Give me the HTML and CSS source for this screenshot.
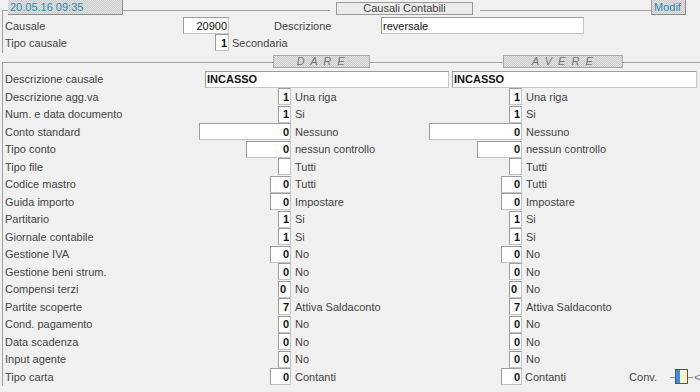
FILE: index.html
```html
<!DOCTYPE html>
<html lang="it">
<head>
    <meta charset="UTF-8">
    <title>Causali Contabili</title>
    <link rel="stylesheet" href="styles.css">
</head>
<body>

<div class="topbar">
    <div class="corner"></div>
    <div class="stamp">20.05.16 09:35</div>
    <div class="rule r1"></div>
    <div class="title">Causali Contabili</div>
    <div class="rule r2"></div>
    <div class="stamp flag">Modif</div>
</div>

<div class="head-block">
    <span class="lbl">Causale</span>
    <input class="fld plain w46" value="20900" readonly>
    <span></span>
    <span class="lbl">Descrizione</span>
    <input class="fld plain left w203" value="reversale" readonly>

    <span class="lbl">Tipo causale</span>
    <input class="fld w14 end" value="1" readonly>
    <span class="txt wide">Secondaria</span>
</div>

<div class="band">
    <div class="corner2"></div>
    <div class="tag dare">D A R E</div>
    <div class="rule r3"></div>
    <div class="tag avere">A V E R E</div>
    <div class="rule r4"></div>
</div>

<div class="rows">
    <div class="dc">
        <span class="lbl dc-lbl">Descrizione causale</span>
        <input class="fld left w244" value="INCASSO" readonly>
        <input class="fld left w245" value="INCASSO" readonly>
    </div>

    <span class="lbl">Descrizione agg.va</span>
    <input class="fld w13" value="1" readonly><span class="txt">Una riga</span>
    <input class="fld w13" value="1" readonly><span class="txt">Una riga</span>

    <span class="lbl">Num. e data documento</span>
    <input class="fld w13" value="1" readonly><span class="txt">Si</span>
    <input class="fld w13" value="1" readonly><span class="txt">Si</span>

    <span class="lbl">Conto standard</span>
    <input class="fld w92" value="0" readonly><span class="txt">Nessuno</span>
    <input class="fld w93" value="0" readonly><span class="txt">Nessuno</span>

    <span class="lbl">Tipo conto</span>
    <input class="fld w45" value="0" readonly><span class="txt">nessun controllo</span>
    <input class="fld w45" value="0" readonly><span class="txt">nessun controllo</span>

    <span class="lbl">Tipo file</span>
    <input class="fld w13" value="" readonly><span class="txt">Tutti</span>
    <input class="fld w13" value="" readonly><span class="txt">Tutti</span>

    <span class="lbl">Codice mastro</span>
    <input class="fld w21" value="0" readonly><span class="txt">Tutti</span>
    <input class="fld w21" value="0" readonly><span class="txt">Tutti</span>

    <span class="lbl">Guida importo</span>
    <input class="fld w21" value="0" readonly><span class="txt">Impostare</span>
    <input class="fld w21" value="0" readonly><span class="txt">Impostare</span>

    <span class="lbl">Partitario</span>
    <input class="fld w13" value="1" readonly><span class="txt">Si</span>
    <input class="fld w13" value="1" readonly><span class="txt">Si</span>

    <span class="lbl">Giornale contabile</span>
    <input class="fld w13" value="1" readonly><span class="txt">Si</span>
    <input class="fld w13" value="1" readonly><span class="txt">Si</span>

    <span class="lbl">Gestione IVA</span>
    <input class="fld w21" value="0" readonly><span class="txt">No</span>
    <input class="fld w21" value="0" readonly><span class="txt">No</span>

    <span class="lbl">Gestione beni strum.</span>
    <input class="fld w13" value="0" readonly><span class="txt">No</span>
    <input class="fld w13" value="0" readonly><span class="txt">No</span>

    <span class="lbl">Compensi terzi</span>
    <input class="fld left w13" value="0" readonly><span class="txt">No</span>
    <input class="fld left w13" value="0" readonly><span class="txt">No</span>

    <span class="lbl">Partite scoperte</span>
    <input class="fld w13" value="7" readonly><span class="txt">Attiva Saldaconto</span>
    <input class="fld w13" value="7" readonly><span class="txt">Attiva Saldaconto</span>

    <span class="lbl">Cond. pagamento</span>
    <input class="fld w13" value="0" readonly><span class="txt">No</span>
    <input class="fld w13" value="0" readonly><span class="txt">No</span>

    <span class="lbl">Data scadenza</span>
    <input class="fld w13" value="0" readonly><span class="txt">No</span>
    <input class="fld w13" value="0" readonly><span class="txt">No</span>

    <span class="lbl">Input agente</span>
    <input class="fld w13" value="0" readonly><span class="txt">No</span>
    <input class="fld w13" value="0" readonly><span class="txt">No</span>

    <span class="lbl">Tipo carta</span>
    <input class="fld w21" value="0" readonly><span class="txt">Contanti</span>
    <input class="fld w21" value="0" readonly>
    <span class="txt last">
        <span>Contanti</span>
        <span class="conv">Conv.</span>
        <svg class="conv-icon" width="30" height="18" viewBox="0 0 30 18">
            <line x1="0" y1="9.5" x2="5" y2="9.5" stroke="#8a8a8a"/>
            <rect x="5.5" y="1.5" width="12" height="14" fill="#fff6c8" stroke="#555"/>
            <rect x="6" y="2" width="4" height="13" fill="#3c8fe0"/>
            <line x1="18" y1="9.5" x2="23" y2="9.5" stroke="#8a8a8a"/>
            <text x="24" y="13" font-size="11" fill="#666" font-family="Liberation Sans, Arial, sans-serif">&lt;</text>
        </svg>
    </span>
</div>

</body>
</html>
```

FILE: styles.css
```css
body {
    margin: 0;
    width: 700px;
    height: 392px;
    overflow: hidden;
    background-color: #f0f0f0;
    font-family: "Liberation Sans", Arial, sans-serif;
    font-size: 11px;
    color: #444;
}
.topbar {
    display: flex;
    align-items: flex-start;
    height: 16px;
}
.corner {
    margin-left: 2px;
    margin-top: 10px;
    width: 5px;
    height: 6px;
    border-top: 1px solid #a0a0a0;
    border-left: 1px solid #a0a0a0;
}
.stamp {
    width: 115px;
    height: 15px;
    box-sizing: border-box;
    padding-left: 2px;
    line-height: 14px;
    color: #2b8bb0;
    background: repeating-conic-gradient(#cbcbcb 0 25%, #e4e4e4 0 50%) 0 0 / 2px 2px;
    border-right: 1px solid #8c8c8c;
    border-bottom: 1px solid #8c8c8c;
}
.flag {
    width: 35px;
    border-left: 1px solid #a0a0a0;
}
.rule {
    margin-top: 10px;
    border-top: 1px solid #a0a0a0;
}
.r1 { width: 207px; margin-right: 6px; }
.r2 { width: 171px; margin-left: 7px; }
.title {
    margin-top: 2px;
    width: 137px;
    height: 13px;
    box-sizing: border-box;
    border: 1px solid #9a9a9a;
    background-color: #ebebeb;
    text-align: center;
    line-height: 11px;
    color: #444;
}
.head-block {
    margin-left: 2px;
    border-left: 1px solid #a0a0a0;
    padding: 1px 0 2px 2px;
    display: grid;
    grid-template-columns: 178px 46px 45px 107px 203px;
    grid-auto-rows: 17px;
    align-items: center;
}
.band {
    display: flex;
    align-items: flex-start;
    margin-top: 2px;
    height: 13px;
}
.corner2 {
    margin-left: 2px;
    margin-top: 7px;
    width: 270px;
    height: 6px;
    border-top: 1px solid #a0a0a0;
    border-left: 1px solid #a0a0a0;
}
.tag {
    height: 13px;
    box-sizing: border-box;
    border: 1px solid #a8a8a8;
    background: repeating-conic-gradient(#cbcbcb 0 25%, #e4e4e4 0 50%) 0 0 / 2px 2px;
    color: #777;
    font-style: italic;
    letter-spacing: 1.5px;
    text-align: center;
    line-height: 11px;
    white-space: pre;
}
.dare { width: 97px; }
.avere { width: 120px; }
.band .rule { margin-top: 7px; }
.r3 { width: 133px; }
.r4 { flex: 1; }
.rows {
    margin-left: 2px;
    border-left: 1px solid #a0a0a0;
    padding: 2.5px 0 0 2px;
    display: grid;
    grid-template-columns: 194px 92px 138px 93px 1fr;
    grid-auto-rows: 17.5px;
    align-items: center;
}
.dc {
    grid-column: 1 / -1;
    display: flex;
    align-items: center;
}
.dc-lbl {
    width: 200px;
}
.lbl {
    white-space: nowrap;
}
.fld {
    justify-self: end;
    height: 17px;
    box-sizing: border-box;
    margin: 0;
    padding: 0 1px;
    border: 1px solid;
    border-color: #9c9c9c #c4c4c4 #c4c4c4 #9c9c9c;
    background-color: #fff;
    font-family: "Liberation Sans", Arial, sans-serif;
    font-size: 11px;
    font-weight: bold;
    color: #111;
    text-align: right;
}
.plain {
    font-weight: normal;
}
.left {
    text-align: left;
}
.w13 { width: 13px; }
.w14 { width: 14px; }
.w21 { width: 21px; }
.w45 { width: 45px; }
.w46 { width: 46px; }
.w92 { width: 92px; }
.w93 { width: 93px; }
.w203 { width: 203px; }
.w244 { width: 244px; }
.w245 { width: 245px; margin-left: 3px; }
.txt {
    padding-left: 4px;
    white-space: nowrap;
}
.wide {
    grid-column: span 3;
    padding-left: 3px;
}
.last {
    display: flex;
    align-items: center;
    padding-left: 3px;
}
.conv {
    margin-left: auto;
    margin-right: 13px;
}
.conv-icon {
    display: block;
}
```
